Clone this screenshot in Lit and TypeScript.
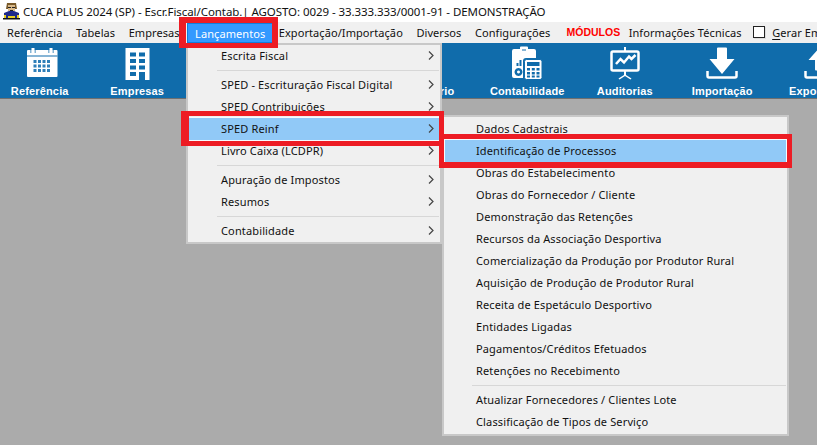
import { LitElement, html, css, svg } from "lit";
import { customElement } from "lit/decorators.js";

type Item = { t?: string; arrow?: boolean; hi?: boolean; sep?: boolean };

const MENU1: Item[] = [
  { t: "Escrita Fiscal", arrow: true },
  { sep: true },
  { t: "SPED - Escrituração Fiscal Digital", arrow: true },
  { t: "SPED Contribuições", arrow: true },
  { t: "SPED Reinf", arrow: true, hi: true },
  { t: "Livro Caixa (LCDPR)", arrow: true },
  { sep: true },
  { t: "Apuração de Impostos", arrow: true },
  { t: "Resumos", arrow: true },
  { sep: true },
  { t: "Contabilidade", arrow: true },
];

const MENU2: Item[] = [
  { t: "Dados Cadastrais" },
  { t: "Identificação de Processos", hi: true },
  { t: "Obras do Estabelecimento" },
  { t: "Obras do Fornecedor / Cliente" },
  { t: "Demonstração das Retenções" },
  { t: "Recursos da Associação Desportiva" },
  { t: "Comercialização da Produção por Produtor Rural" },
  { t: "Aquisição de Produção de Produtor Rural" },
  { t: "Receita de Espetáculo Desportivo" },
  { t: "Entidades Ligadas" },
  { t: "Pagamentos/Créditos Efetuados" },
  { t: "Retenções no Recebimento" },
  { sep: true },
  { t: "Atualizar Fornecedores / Clientes Lote" },
  { t: "Classificação de Tipos de Serviço" },
];

const ICONS: Record<string, unknown> = {
  cal: svg`<path fill="#fff" d="M6 5h28.500a1 1 0 0 1 1 1v25a1 1 0 0 1-1 1H6a1 1 0 0 1-1-1V6a1 1 0 0 1 1-1z"/>
    <path fill="#106cab" d="M5 10.500h30.500v1H5zM8.500 3h1v5h-1zM12.500 3h1v5h-1zM26.500 3h1v5h-1zM30.500 3h1v5h-1z"/>
    <path fill="#fff" d="M9.500 3h3v5h-3zM27.500 3h3v5h-3z"/>
    <g fill="#2f7fb8"><path d="M11.500 15h3v3h-3zM16 15h3v3h-3zM20.500 15h3v3h-3zM25 15h3v3h-3zM11.500 19.500h3v3h-3zM16 19.500h3v3h-3zM20.500 19.500h3v3h-3zM25 19.500h3v3h-3zM11.500 24h3v3h-3zM16 24h3v3h-3zM20.500 24h3v3h-3zM25 24h3v3h-3z"/></g>`,
  bld: svg`<path fill="#fff" d="M6.500 3h24v32h-24z"/>
    <g fill="#106cab"><path d="M11 7.500h6v4h-6zM20 7.500h6v4h-6zM11 14h6v4h-6zM20 14h6v4h-6zM11 20.500h6v4h-6zM20 20.500h6v4h-6zM11 27h6v4h-6zM20 27h6v8h-6z"/></g>`,
  con: svg`<path fill="#fff" d="M5 4h6V2.500a1 1 0 0 1 1-1h6a1 1 0 0 1 1 1V4h6a2 2 0 0 1 2 2v7H17a3 3 0 0 0-3 3v17H5a2 2 0 0 1-2-2V6a2 2 0 0 1 2-2z"/>
    <path fill="#106cab" d="M13 4h4v2h-4z" opacity=".5"/>
    <path fill="#106cab" d="M7.500 18h2v3h-2zM10.500 15h2v6h-2z"/><path fill="#106cab" fill-rule="evenodd" d="M9.500 23a4 4 0 1 0 .01 0zM9.500 25.500a1.500 1.500 0 1 1-.01 0z"/>
    <rect x="15.500" y="14.500" width="17.500" height="20" rx="2" fill="#fff" stroke="#106cab" stroke-width="1"/>
    <path fill="#106cab" d="M18 17h12.500v4H18zM18 23h3v2.500h-3zM22.800 23h3v2.500h-3zM27.500 23h3v2.500h-3zM18 27h3v2.500h-3zM22.800 27h3v2.500h-3zM27.500 27h3v2.500h-3zM18 30.500h3v2h-3zM22.800 30.500h3v2h-3zM27.500 30.500h3v2h-3z"/>`,
  aud: svg`<path fill="#fff" d="M17 2h2v4h-2z"/>
    <rect x="4.500" y="6.500" width="27" height="19" rx="1.500" fill="none" stroke="#fff" stroke-width="2.500"/>
    <path fill="none" stroke="#fff" stroke-width="2.500" d="M9 19l4.500-5 3.500 3.500 5-6 2.500 2.500 4-4"/>
    <path fill="#fff" d="M17 26h2v4l5.500 3.500-1 1L18 31l-5.500 3.500-1-1L17 30z"/>`,
  imp: svg`<path fill="#fff" d="M14 2.500h8a1 1 0 0 1 1 1V14h7.500L18 29 5.500 14H13V3.500a1 1 0 0 1 1-1z"/>
    <path fill="none" stroke="#fff" stroke-width="2.500" d="M3.500 26v5a1.500 1.500 0 0 0 1.500 1.500h26a1.500 1.500 0 0 0 1.500-1.500v-5"/>`,
  exp: svg`<path fill="#fff" d="M18 2l11.500 13H23v9.500a1 1 0 0 1-1 1h-8a1 1 0 0 1-1-1V15H6.500z"/>
    <path fill="none" stroke="#fff" stroke-width="2.500" d="M3.500 26v5a1.500 1.500 0 0 0 1.500 1.500h26a1.500 1.500 0 0 0 1.500-1.500v-5"/>`,
};

const TOOLS = [
  ["Referência", "cal"],
  ["Empresas", "bld"],
  ["", ""],
  ["", ""],
  ["Relatório", ""],
  ["Contabilidade", "con"],
  ["Auditorias", "aud"],
  ["Importação", "imp"],
  ["Exportação", "exp"],
];

@customElement("app-root")
export class AppRoot extends LitElement {
  static styles = css`
    :host {
      display: block;
      width: 817px;
      height: 445px;
      position: relative;
      overflow: hidden;
      background: #ababab;
      font-family: "Noto Sans", sans-serif;
      font-size: 11px;
      letter-spacing: 0.14px;
      color: #111;
    }
    .title {
      height: 22px;
      background: #fff;
      display: flex;
      align-items: center;
      gap: 3px;
      padding-left: 3px;
      font-size: 11.5px;
      letter-spacing: -0.07px;
      white-space: nowrap;
    }
    .logo { width: 17px; height: 18px; flex: none; }
    .menubar {
      height: 21px;
      background: #f0f0f0;
      display: flex;
      align-items: center;
      white-space: nowrap;
      gap: 13.5px;
      padding-left: 7px;
      letter-spacing: 0.08px;
      overflow: hidden;
    }
    .menubar > span { flex: none; padding-bottom: 1px; }
    .menubar .mod {
      color: #f00;
      font-weight: 700;
      font-family: "Liberation Sans", sans-serif;
      font-size: 10.5px;
      letter-spacing: 0;
      margin-left: 2.5px;
    }
    .menubar .act {
      color: #fff;
      background: #3399ff;
      border: 1px solid #0f7ddc;
      box-sizing: border-box;
      height: 20px;
      width: 86px;
      margin: 0 -8px 0 -6px;
      padding-bottom: 0;
      display: flex;
      align-items: center;
      justify-content: center;
      align-self: flex-end;
    }
    .info { margin-left: -5px; }
    .check {
      display: flex;
      align-items: center;
      gap: 7px;
      margin-left: -2px;
    }
    .box {
      width: 10px;
      height: 10px;
      border: 1px solid #222;
      background: #fff;
      box-shadow: 1px 1px 0 #ddd;
    }
    u { text-underline-offset: 2px; }
    .toolbar {
      height: 55px;
      background: #106cab;
      border-bottom: 1px solid #6f6f6f;
      display: flex;
      margin-left: -9px;
      overflow: hidden;
    }
    .tool {
      flex: 0 0 97.5px;
      display: flex;
      flex-direction: column;
      align-items: center;
      padding-top: 2px;
      color: #fff;
      font-family: "Liberation Sans", sans-serif;
      font-weight: 700;
      font-size: 11px;
      letter-spacing: 0.15px;
      white-space: nowrap;
    }
    .tool svg, .tool .blank { width: 36px; height: 36px; flex: none; }
    .tool span { line-height: 14px; margin-top: 3px; }
    .menu {
      position: absolute;
      background: #f0f0f0;
      border: 2px solid #c8c8c8;
      box-sizing: border-box;
    }
    .m1 { left: 186px; top: 43px; width: 256px; height: 201px; padding: 0 1px; }
    .m2 { left: 442px; top: 115px; width: 347px; height: 321px; padding: 1px 1px; }
    .row {
      height: 22px;
      box-sizing: border-box;
      display: flex;
      align-items: center;
      justify-content: space-between;
      padding: 0 5px 2px 31px;
      white-space: nowrap;
    }
    .m1 .row { padding-left: 32px; }
    .row.hi { background: #91c9f7; outline: 1px solid #f6fbff; }
    .row svg { width: 6px; height: 9px; flex: none; }
    .sep { height: 7px; display: flex; align-items: center; padding-left: 27px; }
    .m1 .sep { padding-left: 28px; }
    .sep i { display: block; height: 1px; flex: 1; background: #d7d7d7; }
    .frame { position: absolute; box-sizing: border-box; border: 5px solid #ed1c24; }
    .f1 { left: 179px; top: 17px; width: 99px; height: 31px; border-width: 6px 6px 5px 7px; }
    .f2 { left: 181px; top: 111px; width: 263px; height: 35px; border-left-width: 8px; }
    .f3 { left: 439px; top: 134px; width: 353px; height: 34px; border-bottom-width: 6px; }
  `;

  private renderRow(i: Item) {
    if (i.sep) return html`<div class="sep"><i></i></div>`;
    return html`<div class="row ${i.hi ? "hi" : ""}">
      <span>${i.t}</span>
      ${i.arrow
        ? html`<svg viewBox="0 0 6 9"><path d="M1 .5L5 4.500 1 8.500" fill="none" stroke="#444" stroke-width="1.200"/></svg>`
        : ""}
    </div>`;
  }

  render() {
    return html`
      <div class="title">
        <svg class="logo" viewBox="0 0 17 18">
          <path fill="#7a5a2a" d="M4 1h9l1 6H3z"/>
          <path fill="#d9b98a" d="M5 3h7v6H5z"/>
          <path fill="#222" d="M5 5h3v1H5zM9 5h3v1H9zM7 8h3v1H7z"/>
          <path fill="#1f2a8a" d="M1 11l5-2h5l5 2v5H1z"/>
          <path fill="#e8d020" d="M1 13h2v3H1zM14 13h2v3h-2zM5 14h7v2.500H5z"/>
          <path fill="#111" d="M0 16h17v1.500H0z"/>
        </svg>
        <span>CUCA PLUS 2024 (SP) - Escr.Fiscal/Contab.| AGOSTO: 0029 - 33.333.333/0001-91 - DEMONSTRAÇÃO</span>
      </div>
      <div class="menubar">
        <span>Referência</span>
        <span>Tabelas</span>
        <span>Empresas</span>
        <span class="act">Lançamentos</span>
        <span>Exportação/Importação</span>
        <span>Diversos</span>
        <span>Configurações</span>
        <span class="mod">MÓDULOS</span>
        <span class="info">Informações Técnicas</span>
        <span class="check"><span class="box"></span><span><u>G</u>erar Empresa</span></span>
      </div>
      <div class="toolbar">
        ${TOOLS.map(
          ([label, ic]) => html`<div class="tool">
            ${ic ? html`<svg viewBox="0 0 36 36">${ICONS[ic]}</svg>` : html`<div class="blank"></div>`}
            ${label ? html`<span>${label}</span>` : ""}
          </div>`
        )}
      </div>
      <div class="menu m1">${MENU1.map((i) => this.renderRow(i))}</div>
      <div class="menu m2">${MENU2.map((i) => this.renderRow(i))}</div>
      <div class="frame f1"></div>
      <div class="frame f2"></div>
      <div class="frame f3"></div>
    `;
  }
}
